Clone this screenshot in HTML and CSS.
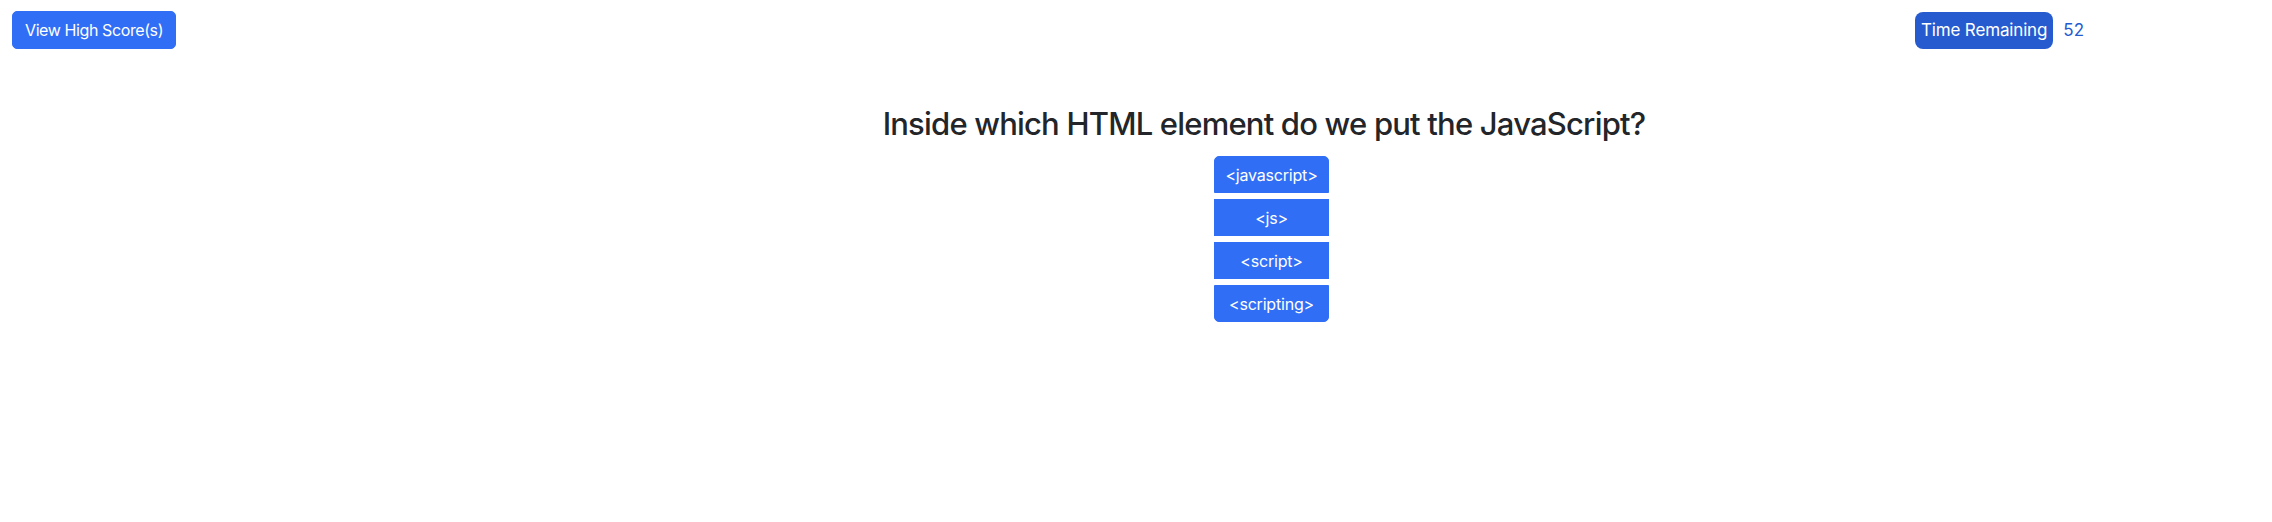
FILE: index.html
```html
<!DOCTYPE html>
<html lang="en">
<head>
<meta charset="utf-8">
<title>Code Quiz</title>
<link rel="stylesheet" href="styles.css">
</head>
<body>
<header class="topbar">
  <button class="btn btn-scores">View High Score(s)</button>
  <div class="timer">
    <span class="timer-label">Time Remaining</span>
    <span class="timer-value">52</span>
  </div>
</header>
<main class="quiz">
  <h2 class="question">Inside which HTML element do we put the JavaScript?</h2>
  <div class="answers">
    <button class="btn answer">&lt;javascript&gt;</button>
    <button class="btn answer">&lt;js&gt;</button>
    <button class="btn answer">&lt;script&gt;</button>
    <button class="btn answer">&lt;scripting&gt;</button>
  </div>
</main>
</body>
</html>
```
FILE: styles.css
```css
* { box-sizing: border-box; }
html, body { margin: 0; padding: 0; background: #ffffff; }
body {
  font-family: Inter, "Noto Sans", "Liberation Sans", sans-serif;
  color: #222529;
}
.topbar {
  display: flex;
  align-items: center;
  padding: 11px 0 0 12px;
}
.btn {
  font-family: inherit;
  font-size: 16px;
  line-height: 24px;
  color: #ffffff;
  background: #306ef6;
  border: 1px solid #306ef6;
  cursor: pointer;
  letter-spacing: -0.2px;
}
.btn-scores {
  height: 38px;
  padding: 0 12px;
  border-radius: 5px;
  letter-spacing: -0.4px;
}
.timer {
  display: flex;
  align-items: center;
  margin-left: auto;
  margin-right: 188px;
}
.timer-label {
  display: inline-flex;
  align-items: center;
  height: 37px;
  padding: 0 6px;
  background: #265bd0;
  color: #ffffff;
  border-radius: 8px;
  font-size: 17px;
  letter-spacing: -0.15px;
}
.timer-value {
  margin-left: 10px;
  color: #265bd0;
  font-size: 17px;
}
.quiz {
  display: flex;
  flex-direction: column;
  align-items: center;
  padding-left: 256px;
}
.question {
  margin: 56px 0 14px;
  text-align: center;
  font-size: 31px;
  font-weight: 500;
  line-height: 1.2;
  letter-spacing: -0.8px;
  color: #222529;
}
.answers {
  display: flex;
  flex-direction: column;
  gap: 6px;
  width: 115px;
  margin-left: 15px;
}
.answer {
  height: 37px;
  padding: 0 6px;
  border-radius: 0;
}
.answer:first-child { border-radius: 5px 5px 0 0; }
.answer:last-child { border-radius: 0 0 5px 5px; }
```
